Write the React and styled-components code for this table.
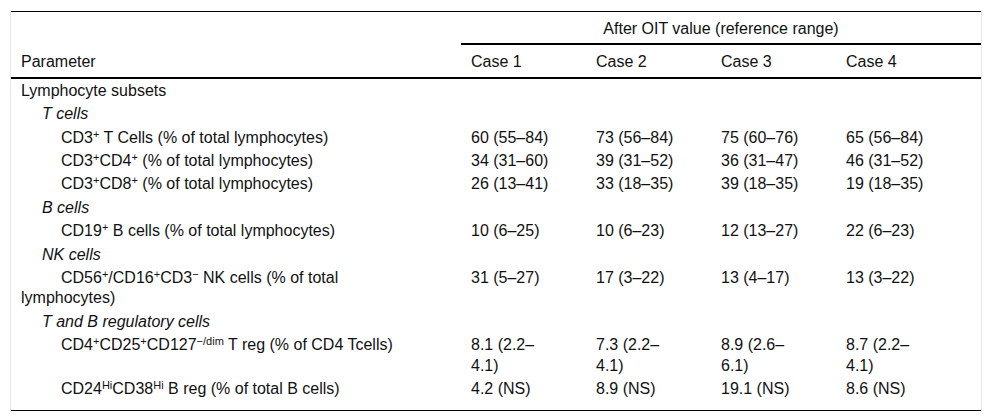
import React from "react";
import styled, { createGlobalStyle } from "styled-components";

const GlobalStyle = createGlobalStyle`
  body {
    margin: 11px 10px;
    background: #fff;
    font-family: "Liberation Sans", Arial, sans-serif;
    color: #111;
  }
`;

const Wrapper = styled.div`
  border-left: 1px solid #e6e6e6;
  border-right: 1px solid #e6e6e6;
`;

const Table = styled.table`
  width: 100%;
  border-collapse: collapse;
  table-layout: fixed;
  font-size: 16px;
  line-height: 20.4px;
  border-top: 1px solid #000;
  border-bottom: 1px solid #000;
`;

const Head = styled.th`
  font-weight: normal;
  text-align: ${(p) => (p.$center ? "center" : "left")};
  vertical-align: bottom;
  padding: 7px 10px 4px;
  border-bottom: ${(p) => (p.$rule ? "2px solid #000" : "none")};
`;

const Cell = styled.td`
  vertical-align: top;
  padding: 2px 10px ${(p) => (p.$last ? 10 : 1)}px;
  text-indent: ${(p) => p.$indent || 0}px;
  font-style: ${(p) => (p.$italic ? "italic" : "normal")};
`;

const Label = styled.div`
  max-width: 390px;
`;

const Value = styled.div`
  max-width: 80px;
`;

const Sup = styled.sup`
  font-size: 11px;
  line-height: 0;
  vertical-align: 5px;
`;

const groups = [
  { title: "Lymphocyte subsets", level: 0 },
  { title: "T cells", level: 1, italic: true },
  {
    label: (
      <>
        CD3<Sup>+</Sup> T Cells (% of total lymphocytes)
      </>
    ),
    values: ["60 (55–84)", "73 (56–84)", "75 (60–76)", "65 (56–84)"],
  },
  {
    label: (
      <>
        CD3<Sup>+</Sup>CD4<Sup>+</Sup> (% of total lymphocytes)
      </>
    ),
    values: ["34 (31–60)", "39 (31–52)", "36 (31–47)", "46 (31–52)"],
  },
  {
    label: (
      <>
        CD3<Sup>+</Sup>CD8<Sup>+</Sup> (% of total lymphocytes)
      </>
    ),
    values: ["26 (13–41)", "33 (18–35)", "39 (18–35)", "19 (18–35)"],
  },
  { title: "B cells", level: 1, italic: true },
  {
    label: (
      <>
        CD19<Sup>+</Sup> B cells (% of total lymphocytes)
      </>
    ),
    values: ["10 (6–25)", "10 (6–23)", "12 (13–27)", "22 (6–23)"],
  },
  { title: "NK cells", level: 1, italic: true },
  {
    label: (
      <>
        CD56<Sup>+</Sup>/CD16<Sup>+</Sup>CD3<Sup>−</Sup> NK cells (% of total
        lymphocytes)
      </>
    ),
    values: ["31 (5–27)", "17 (3–22)", "13 (4–17)", "13 (3–22)"],
  },
  { title: "T and B regulatory cells", level: 1, italic: true },
  {
    label: (
      <>
        CD4<Sup>+</Sup>CD25<Sup>+</Sup>CD127<Sup>−/dim</Sup> T reg (% of CD4
        Tcells)
      </>
    ),
    values: ["8.1 (2.2–4.1)", "7.3 (2.2–4.1)", "8.9 (2.6–6.1)", "8.7 (2.2–4.1)"],
  },
  {
    label: (
      <>
        CD24<Sup>Hi</Sup>CD38<Sup>Hi</Sup> B reg (% of total B cells)
      </>
    ),
    values: ["4.2 (NS)", "8.9 (NS)", "19.1 (NS)", "8.6 (NS)"],
  },
];

const indents = [0, 21, 40];

export default function App() {
  return (
    <>
      <GlobalStyle />
      <Wrapper>
        <Table>
          <colgroup>
            <col style={{ width: 450 }} />
            <col style={{ width: 125 }} />
            <col style={{ width: 125 }} />
            <col style={{ width: 125 }} />
            <col />
          </colgroup>
          <thead>
            <tr>
              <Head rowSpan={2} $rule>
                Parameter
              </Head>
              <Head colSpan={4} $center $rule>
                After OIT value (reference range)
              </Head>
            </tr>
            <tr>
              <Head $rule>Case 1</Head>
              <Head $rule>Case 2</Head>
              <Head $rule>Case 3</Head>
              <Head $rule>Case 4</Head>
            </tr>
          </thead>
          <tbody>
            {groups.map((row, i) => {
              const last = i === groups.length - 1;
              return row.title ? (
                <tr key={i}>
                  <Cell
                    colSpan={5}
                    $indent={indents[row.level]}
                    $italic={row.italic}
                  >
                    {row.title}
                  </Cell>
                </tr>
              ) : (
                <tr key={i}>
                  <Cell $indent={indents[2]} $last={last}>
                    <Label>{row.label}</Label>
                  </Cell>
                  {row.values.map((v) => (
                    <Cell key={v} $last={last}>
                      <Value>{v}</Value>
                    </Cell>
                  ))}
                </tr>
              );
            })}
          </tbody>
        </Table>
      </Wrapper>
    </>
  );
}
